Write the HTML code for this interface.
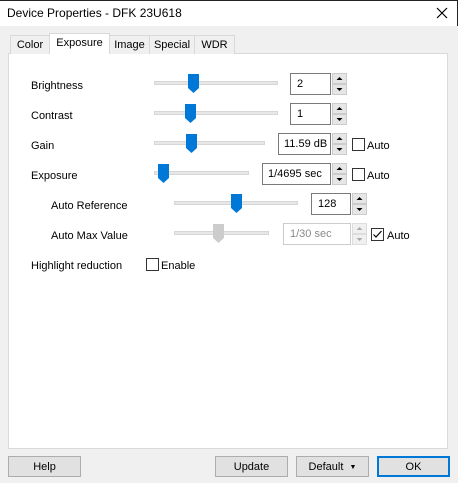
<!DOCTYPE html>
<html><head><style>
*{box-sizing:border-box;margin:0;padding:0}
body{width:458px;height:483px;background:#f0f0f0;font-family:"Liberation Sans",sans-serif;font-size:11px;color:#000;position:relative;overflow:hidden;white-space:nowrap}
.a{position:absolute}
.title{left:0;top:0;width:458px;height:26px;background:#fff;border-top:1px solid #222;border-right:1px solid #222}
.panel{left:8px;top:53px;width:440px;height:396px;background:#fff;border:1px solid #d9d9d9}
.tab{top:35px;height:19px;border:1px solid #d9d9d9;border-bottom:none;background:#f0f0f0;text-align:center;line-height:18px}
.tab.sel{top:33px;height:21px;background:#fff;z-index:2}
.lbl{line-height:14px}
.track{height:4px;background:#e7e7e7;border:1px solid #d6d6d6}
.thumb{width:11px;height:19px}
.edit{height:22px;border:1px solid #7a7a7a;background:#fff;line-height:20px;padding-left:6px;overflow:hidden}
.spin{width:15px;height:22px}
.cb{width:13px;height:13px;border:1px solid #333;background:#fff}
.btn{top:456px;height:21px;width:73px;background:#e1e1e1;border:1px solid #adadad;text-align:center;line-height:20px}
</style></head><body>
<div class="a title"></div>
<div class="a" style="left:7px;top:6px;font-size:12px">Device Properties - DFK 23U618</div>
<svg class="a" style="left:436px;top:7px" width="12" height="12"><path d="M1 1L11 11M11 1L1 11" stroke="#000" stroke-width="1.2"/></svg>
<div class="a panel"></div>
<div class="a tab" style="left:10px;width:40px">Color</div>
<div class="a tab sel" style="left:49px;width:61px">Exposure</div>
<div class="a tab" style="left:109px;width:41px">Image</div>
<div class="a tab" style="left:149px;width:46px">Special</div>
<div class="a tab" style="left:194px;width:41px">WDR</div>

<div class="a lbl" style="left:31px;top:79px">Brightness</div>
<div class="a lbl" style="left:31px;top:109px">Contrast</div>
<div class="a lbl" style="left:31px;top:139px">Gain</div>
<div class="a lbl" style="left:31px;top:169px">Exposure</div>
<div class="a lbl" style="left:51px;top:199px">Auto Reference</div>
<div class="a lbl" style="left:51px;top:229px">Auto Max Value</div>
<div class="a lbl" style="left:31px;top:259px">Highlight reduction</div>

<div class="a track" style="left:154px;top:81px;width:124px"></div>
<div class="a track" style="left:154px;top:111px;width:124px"></div>
<div class="a track" style="left:154px;top:141px;width:111px"></div>
<div class="a track" style="left:154px;top:171px;width:95px"></div>
<div class="a track" style="left:174px;top:201px;width:124px"></div>
<div class="a track" style="left:174px;top:231px;width:95px"></div>

<svg class="a thumb" style="left:188px;top:74px"><path d="M0 0H11V14L5.5 19L0 14Z" fill="#0078d7"/></svg>
<svg class="a thumb" style="left:185px;top:104px"><path d="M0 0H11V14L5.5 19L0 14Z" fill="#0078d7"/></svg>
<svg class="a thumb" style="left:186px;top:134px"><path d="M0 0H11V14L5.5 19L0 14Z" fill="#0078d7"/></svg>
<svg class="a thumb" style="left:158px;top:164px"><path d="M0 0H11V14L5.5 19L0 14Z" fill="#0078d7"/></svg>
<svg class="a thumb" style="left:231px;top:194px"><path d="M0 0H11V14L5.5 19L0 14Z" fill="#0078d7"/></svg>
<svg class="a thumb" style="left:213px;top:224px"><path d="M0 0H11V14L5.5 19L0 14Z" fill="#cccccc"/></svg>

<div class="a edit" style="left:290px;top:73px;width:41px">2</div>
<div class="a edit" style="left:290px;top:103px;width:41px">1</div>
<div class="a edit" style="left:278px;top:133px;width:53px;padding-left:5px">11.59 dB</div>
<div class="a edit" style="left:262px;top:163px;width:69px;padding-left:5px">1/4695 sec</div>
<div class="a edit" style="left:311px;top:193px;width:40px">128</div>
<div class="a edit" style="left:283px;top:223px;width:68px;border-color:#ccc;color:#8a8a8a">1/30 sec</div>

<svg class="a spin" style="left:332px;top:73px"><rect x=".5" y=".5" width="14" height="10" fill="#e6e6e6" stroke="#ccc"/><rect x=".5" y="11.5" width="14" height="10" fill="#e6e6e6" stroke="#ccc"/><path d="M4.5 7L7.5 4L10.5 7ZM4.5 15L7.5 18L10.5 15Z" fill="#000"/></svg>
<svg class="a spin" style="left:332px;top:103px"><rect x=".5" y=".5" width="14" height="10" fill="#e6e6e6" stroke="#ccc"/><rect x=".5" y="11.5" width="14" height="10" fill="#e6e6e6" stroke="#ccc"/><path d="M4.5 7L7.5 4L10.5 7ZM4.5 15L7.5 18L10.5 15Z" fill="#000"/></svg>
<svg class="a spin" style="left:332px;top:133px"><rect x=".5" y=".5" width="14" height="10" fill="#e6e6e6" stroke="#ccc"/><rect x=".5" y="11.5" width="14" height="10" fill="#e6e6e6" stroke="#ccc"/><path d="M4.5 7L7.5 4L10.5 7ZM4.5 15L7.5 18L10.5 15Z" fill="#000"/></svg>
<svg class="a spin" style="left:332px;top:163px"><rect x=".5" y=".5" width="14" height="10" fill="#e6e6e6" stroke="#ccc"/><rect x=".5" y="11.5" width="14" height="10" fill="#e6e6e6" stroke="#ccc"/><path d="M4.5 7L7.5 4L10.5 7ZM4.5 15L7.5 18L10.5 15Z" fill="#000"/></svg>
<svg class="a spin" style="left:352px;top:193px"><rect x=".5" y=".5" width="14" height="10" fill="#e6e6e6" stroke="#ccc"/><rect x=".5" y="11.5" width="14" height="10" fill="#e6e6e6" stroke="#ccc"/><path d="M4.5 7L7.5 4L10.5 7ZM4.5 15L7.5 18L10.5 15Z" fill="#000"/></svg>
<svg class="a spin" style="left:352px;top:223px"><rect x=".5" y=".5" width="14" height="10" fill="#f0f0f0" stroke="#ddd"/><rect x=".5" y="11.5" width="14" height="10" fill="#f0f0f0" stroke="#ddd"/><path d="M4.5 7L7.5 4L10.5 7ZM4.5 15L7.5 18L10.5 15Z" fill="#aaa"/></svg>

<div class="a cb" style="left:352px;top:138px"></div><div class="a lbl" style="left:367px;top:139px">Auto</div>
<div class="a cb" style="left:352px;top:168px"></div><div class="a lbl" style="left:367px;top:169px">Auto</div>
<svg class="a" style="left:371px;top:228px" width="13" height="13"><rect x=".5" y=".5" width="12" height="12" fill="#fff" stroke="#333"/><path d="M2.5 6.5L5 9L10.5 3" stroke="#000" stroke-width="1.2" fill="none"/></svg><div class="a lbl" style="left:387px;top:229px">Auto</div>
<div class="a cb" style="left:146px;top:258px"></div><div class="a lbl" style="left:161px;top:259px">Enable</div>

<div class="a btn" style="left:8px">Help</div>
<div class="a btn" style="left:215px">Update</div>
<div class="a btn" style="left:296px">Default &nbsp;<span style="font-size:7px;vertical-align:1px">▼</span></div>
<div class="a btn" style="left:377px;border:2px solid #0078d7;line-height:18px">OK</div>
</body></html>
